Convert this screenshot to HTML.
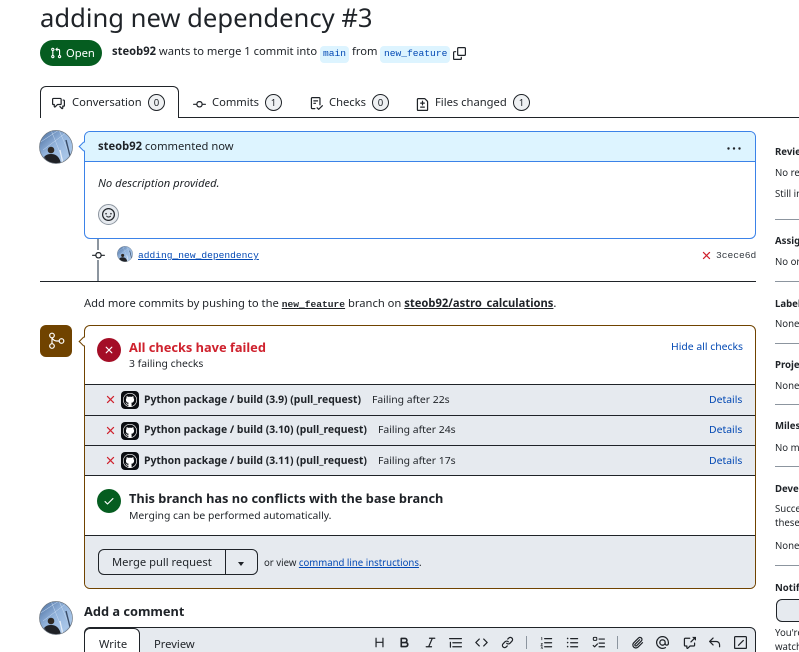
<!DOCTYPE html>
<html lang="en"><head><meta charset="utf-8"><title>adding new dependency #3</title>
<style>
html,body{margin:0;padding:0;background:#fff;width:799px;height:652px;overflow:hidden}
#w{position:relative;width:799px;height:652px;overflow:hidden;font-family:"Noto Sans","DejaVu Sans","Liberation Sans",sans-serif;color:#1f2328;font-size:11.2px}
.a,.t,svg.i{position:absolute}
.t{white-space:nowrap;line-height:16px}
b{font-weight:700}
.m{font-family:"Liberation Mono",monospace}
.l{color:#0349b4}
.c{position:absolute;box-sizing:border-box;width:17px;height:17px;top:94px;border:1px solid #1f2328;border-radius:50%;background:#eff1f3;font-size:9.6px;line-height:15px;text-align:center}
.hr{position:absolute;left:775px;width:24px;height:1px;background:#8c959f}
.s{left:775px;font-size:9.6px}
svg.i{fill:#1f2328}
.row{position:absolute;left:85px;width:670px;background:#e6eaef;border-top:1px solid #1f2328;box-sizing:border-box}
.tb{top:636px;width:13px;height:13px;fill:#32383f}
</style></head><body><div id="w">
<svg width="0" height="0" style="position:absolute"><defs>
<symbol id="x" viewBox="0 0 16 16"><path d="M3.72 3.72a.75.75 0 0 1 1.06 0L8 6.94l3.22-3.22a.749.749 0 0 1 1.275.326.749.749 0 0 1-.215.734L9.06 8l3.22 3.22a.749.749 0 0 1-.326 1.275.749.749 0 0 1-.734-.215L8 9.06l-3.22 3.22a.751.751 0 0 1-1.042-.018.751.751 0 0 1-.018-1.042L6.94 8 3.72 4.78a.75.75 0 0 1 0-1.06Z"/></symbol>
<symbol id="commit" viewBox="0 0 16 16"><path d="M11.93 8.5a4.002 4.002 0 0 1-7.86 0H.75a.75.75 0 0 1 0-1.5h3.32a4.002 4.002 0 0 1 7.86 0h3.32a.75.75 0 0 1 0 1.5Zm-1.43-.75a2.5 2.5 0 1 0-5 0 2.5 2.5 0 0 0 5 0Z"/></symbol>
<symbol id="gh" viewBox="0 0 18 18"><rect width="18" height="18" rx="4" fill="#0a0c10"/><circle cx="9" cy="9" r="7" fill="#fff"/><g transform="translate(2.6 2.6) scale(.8)"><path fill="#0a0c10" d="M8 0c4.42 0 8 3.58 8 8a8.013 8.013 0 0 1-5.45 7.59c-.4.08-.55-.17-.55-.38 0-.27.01-1.13.01-2.2 0-.75-.25-1.23-.54-1.48 1.78-.2 3.65-.88 3.65-3.95 0-.88-.31-1.59-.82-2.15.08-.2.36-1.02-.08-2.12 0 0-.67-.22-2.2.82-.64-.18-1.32-.27-2-.27-.68 0-1.36.09-2 .27-1.53-1.03-2.2-.82-2.2-.82-.44 1.1-.16 1.92-.08 2.12-.51.56-.82 1.28-.82 2.15 0 3.06 1.86 3.75 3.64 3.95-.23.2-.44.55-.51 1.07-.46.21-1.61.55-2.33-.66-.15-.24-.6-.83-1.23-.82-.67.01-.27.38.01.53.34.19.73.9.82 1.13.16.45.68 1.31 2.69.94 0 .67.01 1.3.01 1.49 0 .21-.15.45-.55.38A7.995 7.995 0 0 1 0 8c0-4.42 3.58-8 8-8Z"/></g></symbol>
<linearGradient id="sky" x1="0" y1="0" x2="1" y2="1"><stop offset="0" stop-color="#46699a"/><stop offset=".45" stop-color="#93b4dc"/><stop offset=".8" stop-color="#a9c6e8"/><stop offset="1" stop-color="#5f7ea3"/></linearGradient>
<symbol id="av" viewBox="0 0 34 34"><clipPath id="cc"><circle cx="17" cy="17" r="16.5"/></clipPath><g clip-path="url(#cc)"><rect width="34" height="34" fill="url(#sky)"/><path d="M0 13 20 0M4 20 28 2M20 0l12 28M12 0l12 30" stroke="#c9dcf2" stroke-width=".5" fill="none"/><path d="M27 10l5 20" stroke="#3a4d68" stroke-width="1.4"/><path d="M21 20l3 14" stroke="#e6eef8" stroke-width="1.2"/><circle cx="12" cy="20" r="3.3" fill="#2e2823"/><path d="M3 34c0-6 3-10 9-10s9 4 10 10Z" fill="#1f2126"/><path d="M0 29l6-2 2 7H0Z" fill="#4b5563"/></g><circle cx="17" cy="17" r="16.5" fill="none" stroke="#6e7781" stroke-width=".7"/></symbol>
</defs></svg>

<div class="t" style="left:40px;top:1px;font-size:25.6px;line-height:34px">adding new dependency #3</div>

<div class="a" style="left:40px;top:40px;width:62px;height:26px;border-radius:13px;background:#055d20"></div>
<svg class="i" style="left:50px;top:47px;fill:#fff" width="12" height="12" viewBox="0 0 16 16"><path d="M1.5 3.25a2.25 2.25 0 1 1 3 2.122v5.256a2.251 2.251 0 1 1-1.5 0V5.372A2.25 2.25 0 0 1 1.5 3.25Zm5.677-.177L9.573.677A.25.25 0 0 1 10 .854V2.5h1A2.5 2.5 0 0 1 13.5 5v5.628a2.251 2.251 0 1 1-1.5 0V5a1 1 0 0 0-1-1h-1v1.646a.25.25 0 0 1-.427.177L7.177 3.427a.25.25 0 0 1 0-.354ZM3.75 2.5a.75.75 0 1 0 0 1.5.75.75 0 0 0 0-1.5Zm0 9.5a.75.75 0 1 0 0 1.5.75.75 0 0 0 0-1.5Zm8.25.75a.75.75 0 1 0 1.5 0 .75.75 0 0 0-1.5 0Z"/></svg>
<div class="t" style="left:66px;top:46px;color:#fff">Open</div>
<div class="t" style="left:112px;top:44px"><b>steob92</b> wants to merge 1 commit into</div>
<div class="a" style="left:320px;top:46px;width:29px;height:17px;border-radius:4px;background:#ddf4ff"></div>
<div class="t m l" style="left:323px;top:46px;font-size:9.6px">main</div>
<div class="t" style="left:352px;top:44px">from</div>
<div class="a" style="left:380px;top:46px;width:70px;height:17px;border-radius:4px;background:#ddf4ff"></div>
<div class="t m l" style="left:384px;top:46px;font-size:9.6px">new_feature</div>
<svg class="i" style="left:453px;top:47px" width="13" height="13" viewBox="0 0 16 16"><path d="M0 6.75C0 5.784.784 5 1.75 5h1.5a.75.75 0 0 1 0 1.5h-1.5a.25.25 0 0 0-.25.25v7.5c0 .138.112.25.25.25h7.5a.25.25 0 0 0 .25-.25v-1.5a.75.75 0 0 1 1.5 0v1.5A1.75 1.75 0 0 1 9.25 16h-7.5A1.75 1.75 0 0 1 0 14.25Z"/><path d="M5 1.75C5 .784 5.784 0 6.75 0h7.5C15.216 0 16 .784 16 1.75v7.5A1.75 1.75 0 0 1 14.25 11h-7.5A1.75 1.75 0 0 1 5 9.25Zm1.75-.25a.25.25 0 0 0-.25.25v7.5c0 .138.112.25.25.25h7.5a.25.25 0 0 0 .25-.25v-7.5a.25.25 0 0 0-.25-.25Z"/></svg>

<!-- tabs -->
<div class="a" style="left:179px;top:117px;width:620px;height:1px;background:#1f2328"></div>
<div class="a" style="left:40px;top:86px;width:139px;height:32px;box-sizing:border-box;border:1px solid #1f2328;border-bottom:0;border-radius:6px 6px 0 0;background:#fff"></div>
<svg class="i" style="left:52px;top:97px" width="13" height="13" viewBox="0 0 16 16"><path d="M1.75 1h8.5c.966 0 1.75.784 1.75 1.75v5.5A1.75 1.75 0 0 1 10.25 10H7.061l-2.574 2.573A1.458 1.458 0 0 1 2 11.543V10h-.25A1.75 1.75 0 0 1 0 8.25v-5.5C0 1.784.784 1 1.75 1ZM1.5 2.75v5.5c0 .138.112.25.25.25h1a.75.75 0 0 1 .75.75v2.19l2.72-2.72a.749.749 0 0 1 .53-.22h3.5a.25.25 0 0 0 .25-.25v-5.5a.25.25 0 0 0-.25-.25h-8.5a.25.25 0 0 0-.25.25Zm13 2a.25.25 0 0 0-.25-.25h-.5a.75.75 0 0 1 0-1.5h.5c.966 0 1.75.784 1.75 1.75v5.5A1.75 1.75 0 0 1 14.25 12H14v1.543a1.458 1.458 0 0 1-2.487 1.03L9.22 12.28a.749.749 0 0 1 .326-1.275.749.749 0 0 1 .734.215l2.22 2.22v-2.19a.75.75 0 0 1 .75-.75h1a.25.25 0 0 0 .25-.25Z"/></svg>
<div class="t" style="left:72px;top:95px">Conversation</div>
<div class="c" style="left:148px">0</div>
<svg class="i" style="left:193px;top:98px" width="13" height="13" viewBox="0 0 16 16"><use href="#commit"/></svg>
<div class="t" style="left:212px;top:95px">Commits</div>
<div class="c" style="left:265px">1</div>
<svg class="i" style="left:310px;top:97px" width="13" height="13" viewBox="0 0 16 16"><path d="M2.5 1.75v11.5c0 .138.112.25.25.25h3.17a.75.75 0 0 1 0 1.5H2.75A1.75 1.75 0 0 1 1 13.25V1.75C1 .784 1.784 0 2.75 0h8.5C12.216 0 13 .784 13 1.75v7.736a.75.75 0 0 1-1.5 0V1.75a.25.25 0 0 0-.25-.25h-8.5a.25.25 0 0 0-.25.25Zm13.274 9.537v-.001l-4.557 4.45a.75.75 0 0 1-1.055-.008l-1.943-1.95a.75.75 0 0 1 1.062-1.058l1.419 1.425 4.026-3.932a.75.75 0 1 1 1.048 1.074ZM4.75 4h4.5a.75.75 0 0 1 0 1.5h-4.5a.75.75 0 0 1 0-1.5ZM4 7.75A.75.75 0 0 1 4.75 7h2a.75.75 0 0 1 0 1.5h-2A.75.75 0 0 1 4 7.75Z"/></svg>
<div class="t" style="left:329px;top:95px">Checks</div>
<div class="c" style="left:372px">0</div>
<svg class="i" style="left:416px;top:98px" width="13" height="13" viewBox="0 0 16 16"><path d="M1 1.75C1 .784 1.784 0 2.75 0h7.586c.464 0 .909.184 1.237.513l2.914 2.914c.329.328.513.773.513 1.237v9.586A1.75 1.75 0 0 1 13.25 16H2.75A1.75 1.75 0 0 1 1 14.25Zm1.75-.25a.25.25 0 0 0-.25.25v12.5c0 .138.112.25.25.25h10.5a.25.25 0 0 0 .25-.25V4.664a.25.25 0 0 0-.073-.177l-2.914-2.914a.25.25 0 0 0-.177-.073ZM8 3.25a.75.75 0 0 1 .75.75v1.5h1.5a.75.75 0 0 1 0 1.5h-1.5v1.5a.75.75 0 0 1-1.5 0V7h-1.5a.75.75 0 0 1 0-1.5h1.5V4A.75.75 0 0 1 8 3.25Zm-3 8a.75.75 0 0 1 .75-.75h4.5a.75.75 0 0 1 0 1.5h-4.5a.75.75 0 0 1-.75-.75Z"/></svg>
<div class="t" style="left:435px;top:95px">Files changed</div>
<div class="c" style="left:513px">1</div>

<!-- comment -->
<svg class="i" style="left:39px;top:130px" width="34" height="34"><use href="#av"/></svg>
<div class="a" style="left:84px;top:131px;width:672px;height:108px;box-sizing:border-box;border:1px solid #3b82e8;border-radius:6px;background:#fff;overflow:hidden"><div style="height:29px;background:#ddf4ff;border-bottom:1px solid #3b82e8"></div></div>
<div class="a" style="left:80px;top:143px;width:7px;height:7px;background:#ddf4ff;border-left:1px solid #3b82e8;border-bottom:1px solid #3b82e8;transform:rotate(45deg);box-sizing:border-box"></div>
<div class="t" style="left:98px;top:139px"><b>steob92</b> commented now</div>
<svg class="i" style="left:727px;top:147px" width="14" height="3"><circle cx="1.5" cy="1.5" r="1.2"/><circle cx="7" cy="1.5" r="1.2"/><circle cx="12.5" cy="1.5" r="1.2"/></svg>
<div class="t" style="left:98px;top:176px;font-style:italic">No description provided.</div>
<div class="a" style="left:98px;top:204px;width:21px;height:21px;box-sizing:border-box;border:1px solid #8c959f;border-radius:50%;background:#e6eaef"></div>
<svg class="i" style="left:102px;top:208px" width="13" height="13" viewBox="0 0 16 16"><path d="M8 0a8 8 0 1 1 0 16A8 8 0 0 1 8 0ZM1.5 8a6.5 6.5 0 1 0 13 0 6.5 6.5 0 0 0-13 0Zm3.82 1.636a.75.75 0 0 1 1.038.175c.103.118.22.222.35.31.264.178.683.37 1.285.37.602 0 1.02-.192 1.285-.371.13-.088.247-.192.35-.31a.75.75 0 0 1 1.222.87c-.16.166-.338.316-.53.445-.63.418-1.37.638-2.127.629-.946 0-1.652-.308-2.126-.63a3.331 3.331 0 0 1-.715-.657.75.75 0 0 1 .183-1.044ZM12 7a1 1 0 1 1-2 0 1 1 0 0 1 2 0ZM5 8a1 1 0 1 1 0-2 1 1 0 0 1 0 2Z"/></svg>

<div class="a" style="left:97px;top:239px;width:2px;height:42px;background:#8c959f"></div>
<div class="a" style="left:92px;top:250px;width:13px;height:10px;background:#fff"></div>
<svg class="i" style="left:92px;top:249px" width="13" height="13" viewBox="0 0 16 16"><use href="#commit"/></svg>
<svg class="i" style="left:117px;top:246px" width="16" height="16"><use href="#av"/></svg>
<div class="t m l" style="left:138px;top:248px;font-size:9.6px;text-decoration:underline">adding_new_dependency</div>
<svg class="i" style="left:700px;top:249px;fill:#cf222e" width="13" height="13" viewBox="0 0 16 16"><use href="#x"/></svg>
<div class="t m" style="left:716px;top:248px;font-size:9.6px;color:#32383f">3cece6d</div>
<div class="a" style="left:40px;top:281px;width:716px;height:1px;background:#1f2328"></div>

<div class="t" style="left:84px;top:296px">Add more commits by pushing to the <b class="m" style="font-size:9.6px;text-decoration:underline">new_feature</b> branch on <b style="text-decoration:underline">steob92/astro_calculations</b>.</div>

<!-- merge box -->
<div class="a" style="left:40px;top:325px;width:32px;height:32px;border-radius:6px;background:#704300"></div>
<svg class="i" style="left:40px;top:325px;fill:none;stroke:#fff;stroke-width:1.2" width="32" height="32"><circle cx="12" cy="10.500" r="2.300"/><circle cx="12" cy="21" r="2.300"/><circle cx="21.500" cy="16" r="2.300"/><path d="M12 12.800v5.900M12 12.800c.6 2 3 3.200 5 3.200h2.200"/></svg>
<div class="a" style="left:84px;top:325px;width:672px;height:264px;box-sizing:border-box;border:1px solid #704300;border-radius:6px;background:#fff"></div>
<div class="a" style="left:80px;top:338px;width:7px;height:7px;background:#fff;border-left:1px solid #704300;border-bottom:1px solid #704300;transform:rotate(45deg);box-sizing:border-box"></div>

<div class="a" style="left:97px;top:338px;width:24px;height:24px;border-radius:50%;background:#a40e26"></div>
<svg class="i" style="left:103px;top:344px;fill:#fff" width="12" height="12" viewBox="0 0 16 16"><use href="#x"/></svg>
<div class="t" style="left:129px;top:339px;font-size:12.8px;font-weight:700;color:#cf222e">All checks have failed</div>
<div class="t" style="left:129px;top:356px;font-size:10.4px">3 failing checks</div>
<div class="t l" style="left:671px;top:339px;font-size:10.4px">Hide all checks</div>

<div class="row" style="top:384px;height:31px"></div>
<div class="row" style="top:415px;height:30px"></div>
<div class="row" style="top:445px;height:30px"></div>
<div class="a" style="left:85px;top:475px;width:670px;height:1px;background:#1f2328"></div>

<svg class="i" style="left:104px;top:393px;fill:#cf222e" width="13" height="13" viewBox="0 0 16 16"><use href="#x"/></svg>
<svg class="i" style="left:121px;top:391px" width="18" height="18"><use href="#gh"/></svg>
<div class="t" style="left:144px;top:392px;font-size:10.4px"><b>Python package / build (3.9) (pull_request)</b></div>
<div class="t" style="left:372px;top:392px;font-size:10.4px">Failing after 22s</div>
<div class="t l" style="left:709px;top:392px;font-size:10.4px">Details</div>

<svg class="i" style="left:104px;top:424px;fill:#cf222e" width="13" height="13" viewBox="0 0 16 16"><use href="#x"/></svg>
<svg class="i" style="left:121px;top:422px" width="18" height="18"><use href="#gh"/></svg>
<div class="t" style="left:144px;top:422px;font-size:10.4px"><b>Python package / build (3.10) (pull_request)</b></div>
<div class="t" style="left:378px;top:422px;font-size:10.4px">Failing after 24s</div>
<div class="t l" style="left:709px;top:422px;font-size:10.4px">Details</div>

<svg class="i" style="left:104px;top:454px;fill:#cf222e" width="13" height="13" viewBox="0 0 16 16"><use href="#x"/></svg>
<svg class="i" style="left:121px;top:452px" width="18" height="18"><use href="#gh"/></svg>
<div class="t" style="left:144px;top:453px;font-size:10.4px"><b>Python package / build (3.11) (pull_request)</b></div>
<div class="t" style="left:378px;top:453px;font-size:10.4px">Failing after 17s</div>
<div class="t l" style="left:709px;top:453px;font-size:10.4px">Details</div>

<div class="a" style="left:97px;top:489px;width:24px;height:24px;border-radius:50%;background:#055d20"></div>
<svg class="i" style="left:103px;top:495px;fill:#fff" width="12" height="12" viewBox="0 0 16 16"><path d="M13.78 4.22a.75.75 0 0 1 0 1.06l-7.25 7.25a.75.75 0 0 1-1.06 0L2.22 9.28a.751.751 0 0 1 .018-1.042.751.751 0 0 1 1.042-.018L6 10.94l6.72-6.72a.75.75 0 0 1 1.06 0Z"/></svg>
<div class="t" style="left:129px;top:490px;font-size:12.8px;font-weight:700">This branch has no conflicts with the base branch</div>
<div class="t" style="left:129px;top:508px;font-size:10.4px">Merging can be performed automatically.</div>

<div class="a" style="left:85px;top:535px;width:670px;height:53px;box-sizing:border-box;border-top:1px solid #1f2328;border-radius:0 0 5px 5px;background:#e6eaef"></div>
<div class="a" style="left:98px;top:549px;width:160px;height:26px;box-sizing:border-box;border:1px solid #1f2328;border-radius:6px;background:#e6eaef"></div>
<div class="a" style="left:225px;top:549px;width:1px;height:26px;background:#1f2328"></div>
<div class="t" style="left:112px;top:555px">Merge pull request</div>
<div class="a" style="left:238px;top:562px;width:0;height:0;border:3.5px solid transparent;border-top:4px solid #1f2328;border-bottom:0"></div>
<div class="t" style="left:264px;top:555px;font-size:9.6px">or view <span class="l" style="text-decoration:underline">command line instructions</span>.</div>

<!-- add comment -->
<svg class="i" style="left:39px;top:601px" width="34" height="34"><use href="#av"/></svg>
<div class="t" style="left:84px;top:603px;font-size:12.8px;font-weight:700">Add a comment</div>
<div class="a" style="left:84px;top:627px;width:672px;height:40px;box-sizing:border-box;border:1px solid #1f2328;border-radius:6px;background:#e6eaef"></div>
<div class="a" style="left:84px;top:628px;width:56px;height:30px;box-sizing:border-box;border:1px solid #1f2328;border-radius:6px 6px 0 0;background:#fff"></div>
<div class="t" style="left:99px;top:637px">Write</div>
<div class="t" style="left:154px;top:637px">Preview</div>

<svg class="i tb" style="left:373px" viewBox="0 0 16 16"><path d="M3.75 2a.75.75 0 0 1 .75.75V7h7V2.75a.75.75 0 0 1 1.5 0v10.5a.75.75 0 0 1-1.5 0V8.5h-7v4.75a.75.75 0 0 1-1.5 0V2.75A.75.75 0 0 1 3.75 2Z"/></svg>
<svg class="i tb" style="left:398px" viewBox="0 0 16 16"><path d="M4 2h4.5a3.501 3.501 0 0 1 2.852 5.53A3.499 3.499 0 0 1 9.5 14H4a1 1 0 0 1-1-1V3a1 1 0 0 1 1-1Zm1 7v3h4.5a1.5 1.5 0 0 0 0-3Zm3.5-2a1.5 1.5 0 0 0 0-3H5v3Z"/></svg>
<svg class="i tb" style="left:424px" viewBox="0 0 16 16"><path d="M6 2.75A.75.75 0 0 1 6.75 2h6.5a.75.75 0 0 1 0 1.5h-2.505l-3.858 9H9.25a.75.75 0 0 1 0 1.5h-6.5a.75.75 0 0 1 0-1.5h2.505l3.858-9H6.75A.75.75 0 0 1 6 2.75Z"/></svg>
<svg class="i tb" style="left:449px" viewBox="0 0 16 16"><path d="M.75 2.5h14.5a.75.75 0 0 1 0 1.5H.75a.75.75 0 0 1 0-1.5Zm4 5h10.5a.75.75 0 0 1 0 1.5H4.75a.75.75 0 0 1 0-1.5Zm0 5h10.5a.75.75 0 0 1 0 1.5H4.75a.75.75 0 0 1 0-1.5ZM2.5 7.75v6a.75.75 0 0 1-1.5 0v-6a.75.75 0 0 1 1.5 0Z"/></svg>
<svg class="i tb" style="left:475px" viewBox="0 0 16 16"><path d="m11.28 3.22 4.25 4.25a.75.75 0 0 1 0 1.06l-4.25 4.25a.749.749 0 0 1-1.275-.326.749.749 0 0 1 .215-.734L13.94 8l-3.72-3.72a.749.749 0 0 1 .326-1.275.749.749 0 0 1 .734.215Zm-6.56 0a.751.751 0 0 1 1.042.018.751.751 0 0 1 .018 1.042L2.06 8l3.72 3.72a.749.749 0 0 1-.326 1.275.749.749 0 0 1-.734-.215L.47 8.53a.75.75 0 0 1 0-1.06Z"/></svg>
<svg class="i tb" style="left:501px" viewBox="0 0 16 16"><path d="m7.775 3.275 1.25-1.25a3.5 3.5 0 1 1 4.95 4.95l-2.5 2.5a3.5 3.5 0 0 1-4.95 0 .751.751 0 0 1 .018-1.042.751.751 0 0 1 1.042-.018 1.998 1.998 0 0 0 2.83 0l2.5-2.5a2.002 2.002 0 0 0-2.83-2.83l-1.25 1.25a.751.751 0 0 1-1.042-.018.751.751 0 0 1-.018-1.042Zm-4.69 9.64a1.998 1.998 0 0 0 2.83 0l1.25-1.25a.751.751 0 0 1 1.042.018.751.751 0 0 1 .018 1.042l-1.25 1.25a3.5 3.5 0 1 1-4.95-4.95l2.5-2.5a3.5 3.5 0 0 1 4.95 0 .751.751 0 0 1-.018 1.042.751.751 0 0 1-1.042.018 1.998 1.998 0 0 0-2.83 0l-2.5 2.5a1.998 1.998 0 0 0 0 2.83Z"/></svg>
<div class="a" style="left:526px;top:636px;width:1px;height:13px;background:#8c959f"></div>
<svg class="i tb" style="left:540px" viewBox="0 0 16 16"><path d="M5.75 2.5h8.5a.75.75 0 0 1 0 1.5h-8.5a.75.75 0 0 1 0-1.5Zm0 5h8.5a.75.75 0 0 1 0 1.5h-8.5a.75.75 0 0 1 0-1.5Zm0 5h8.5a.75.75 0 0 1 0 1.5h-8.5a.75.75 0 0 1 0-1.5ZM1.5 1.5h1.2v3.6h-.9V2.4h-.3Zm-.6 7.6c.3-.6 2.4-.8 2.4.5 0 .8-.9 1.2-1.3 1.600h1.300v.8H.8v-.7l1.500-1.400c.3-.4-.3-.7-.8-.2Zm0 4h2.400v.7l-.8.7c1.200.3.9 1.900-.5 1.900-.6 0-1-.2-1.200-.4l.3-.6c.4.3 1.400.4 1.400-.2 0-.3-.5-.4-1-.4v-.6l.8-.6H.9Z"/></svg>
<svg class="i tb" style="left:566px" viewBox="0 0 16 16"><path d="M5.75 2.5h8.5a.75.75 0 0 1 0 1.5h-8.5a.75.75 0 0 1 0-1.5Zm0 5h8.5a.75.75 0 0 1 0 1.5h-8.5a.75.75 0 0 1 0-1.5Zm0 5h8.5a.75.75 0 0 1 0 1.5h-8.5a.75.75 0 0 1 0-1.5ZM2 4a1 1 0 1 1 0-2 1 1 0 0 1 0 2Zm1 4a1 1 0 1 1-2 0 1 1 0 0 1 2 0Zm-1 6a1 1 0 1 1 0-2 1 1 0 0 1 0 2Z"/></svg>
<svg class="i tb" style="left:592px" viewBox="0 0 16 16"><path d="M2.5 1h2.5A1.5 1.5 0 0 1 6.5 2.500v2A1.500 1.500 0 0 1 5 6H2.500A1.500 1.500 0 0 1 1 4.500v-2A1.500 1.500 0 0 1 2.500 1Zm0 1.300a.2.200 0 0 0-.2.200v2c0 .1.100.2.200.2H5a.2.200 0 0 0 .2-.2v-2a.2.200 0 0 0-.2-.2ZM8.750 3h6.500a.75.75 0 0 1 0 1.500h-6.500a.75.75 0 0 1 0-1.500Zm0 5h6.500a.75.75 0 0 1 0 1.500h-6.500a.75.75 0 0 1 0-1.500Zm0 4.500h6.500a.75.75 0 0 1 0 1.500h-6.500a.75.75 0 0 1 0-1.500ZM6.200 9.300a.7.7 0 0 1 1 1l-3.500 3.500a.7.7 0 0 1-1 0L1 12.100a.7.700 0 0 1 1-1l1.200 1.200Z"/></svg>
<div class="a" style="left:617px;top:636px;width:1px;height:13px;background:#8c959f"></div>
<svg class="i tb" style="left:631px" viewBox="0 0 16 16"><path d="M12.212 3.02a1.753 1.753 0 0 0-2.478.003l-5.83 5.83a3.007 3.007 0 0 0-.88 2.127c0 .795.315 1.551.88 2.116.567.567 1.333.89 2.126.89.79 0 1.548-.321 2.116-.89l5.48-5.48a.75.75 0 0 1 1.061 1.06l-5.48 5.48a4.492 4.492 0 0 1-3.177 1.33c-1.2 0-2.345-.487-3.187-1.33a4.483 4.483 0 0 1-1.32-3.177c0-1.195.475-2.341 1.32-3.186l5.83-5.83a3.25 3.25 0 0 1 5.553 2.297c0 .863-.343 1.691-.953 2.301L7.439 12.39c-.375.377-.884.59-1.416.593a1.998 1.998 0 0 1-1.412-.593 1.992 1.992 0 0 1 0-2.828l5.48-5.48a.751.751 0 0 1 1.042.018.751.751 0 0 1 .018 1.042l-5.48 5.48a.492.492 0 0 0 0 .707.499.499 0 0 0 .707 0l5.833-5.833a1.755 1.755 0 0 0 0-2.474Z"/></svg>
<svg class="i tb" style="left:656px" viewBox="0 0 16 16"><path d="M4.75 2.37a6.501 6.501 0 0 0 6.5 11.26.75.75 0 0 1 .75 1.298A7.999 7.999 0 0 1 .989 4.148 8 8 0 0 1 16 7.750v1.500a2.750 2.750 0 0 1-5.072 1.475 3.999 3.999 0 0 1-6.650-4.190A4 4 0 0 1 12 8v1.250a1.250 1.250 0 0 0 2.500 0V7.867a6.500 6.500 0 0 0-9.750-5.496ZM10.500 8a2.500 2.500 0 1 0-5 0 2.500 2.500 0 0 0 5 0Z"/></svg>
<svg class="i tb" style="left:683px" viewBox="0 0 16 16"><path d="M2.75 3.5a.25.25 0 0 0-.25.25v7.5c0 .138.112.25.25.25h2a.75.75 0 0 1 .75.75v2.19l2.72-2.72a.749.749 0 0 1 .53-.22h4.5a.25.25 0 0 0 .25-.25v-2.5a.75.75 0 0 1 1.5 0v2.5A1.75 1.75 0 0 1 13.25 13H9.06l-2.573 2.573A1.458 1.458 0 0 1 4 14.543V13H2.75A1.75 1.75 0 0 1 1 11.25v-7.5C1 2.784 1.784 2 2.75 2h5.5a.75.75 0 0 1 0 1.5ZM16 1.25v4.146a.25.25 0 0 1-.427.177L14.030 4.030l-3.750 3.750a.749.749 0 0 1-1.275-.326.749.749 0 0 1 .215-.734l3.750-3.750-1.543-1.543A.25.25 0 0 1 11.604 1h4.146a.25.25 0 0 1 .25.25Z"/></svg>
<svg class="i tb" style="left:708px" viewBox="0 0 16 16"><path d="M6.78 1.97a.75.75 0 0 1 0 1.06L3.81 6h6.44A4.75 4.75 0 0 1 15 10.75v2.5a.75.75 0 0 1-1.5 0v-2.5a3.25 3.25 0 0 0-3.25-3.25H3.81l2.97 2.97a.749.749 0 0 1-.326 1.275.749.749 0 0 1-.734-.215L1.47 7.28a.75.75 0 0 1 0-1.06l4.25-4.25a.75.75 0 0 1 1.06 0Z"/></svg>
<svg class="i tb" style="left:734px" viewBox="0 0 16 16"><path d="M0 1.75C0 .784.784 0 1.750 0h12.500C15.216 0 16 .784 16 1.750v12.500A1.750 1.750 0 0 1 14.250 16H1.750A1.750 1.750 0 0 1 0 14.250Zm1.750-.25a.25.25 0 0 0-.25.25v12.500c0 .138.112.25.25.25h12.500a.25.25 0 0 0 .25-.25V1.750a.25.25 0 0 0-.25-.25Zm9.220 3.470a.75.75 0 0 1 1.060 1.060l-6 6a.75.75 0 0 1-1.060-1.060Z"/></svg>

<!-- sidebar -->
<div class="t s" style="top:144px"><b>Reviewers</b></div>
<div class="t s" style="top:165px">No reviews</div>
<div class="t s" style="top:186px">Still in progress?</div>
<div class="hr" style="top:219px"></div>
<div class="t s" style="top:233px"><b>Assignees</b></div>
<div class="t s" style="top:254px">No one assigned</div>
<div class="hr" style="top:281px"></div>
<div class="t s" style="top:296px"><b>Labels</b></div>
<div class="t s" style="top:316px">None yet</div>
<div class="hr" style="top:343px"></div>
<div class="t s" style="top:357px"><b>Projects</b></div>
<div class="t s" style="top:378px">None yet</div>
<div class="hr" style="top:404px"></div>
<div class="t s" style="top:418px"><b>Milestone</b></div>
<div class="t s" style="top:440px">No milestone</div>
<div class="hr" style="top:466px"></div>
<div class="t s" style="top:481px"><b>Development</b></div>
<div class="t s" style="top:501px">Successfully merging this pull request may close</div>
<div class="t s" style="top:515px">these issues.</div>
<div class="t s" style="top:538px">None yet</div>
<div class="hr" style="top:565px"></div>
<div class="t s" style="top:580px"><b>Notifications</b></div>
<div class="a" style="left:776px;top:599px;width:60px;height:23px;box-sizing:border-box;border:1px solid #1f2328;border-radius:6px;background:#e6eaef"></div>
<div class="t s" style="top:625px">You're receiving notifications because you're</div>
<div class="t s" style="top:639px">watching this repository.</div>
</div></body></html>
